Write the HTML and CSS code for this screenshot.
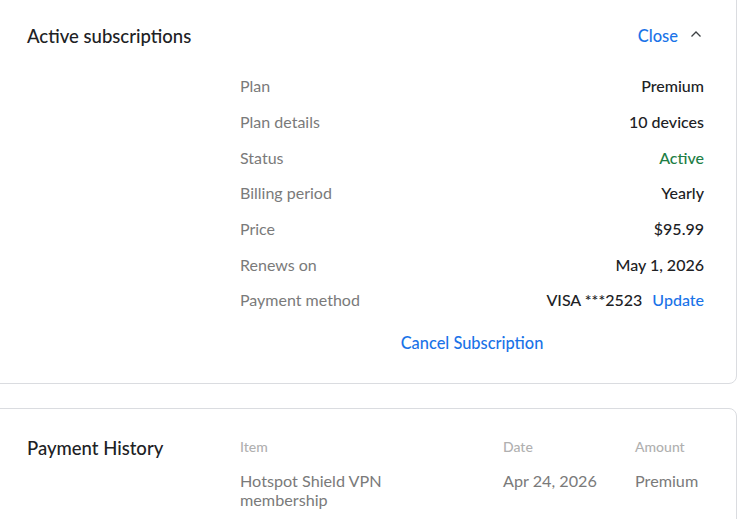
FILE: index.html
```html
<!DOCTYPE html>
<html lang="en">

<head>
    <meta charset="UTF-8">
    <meta name="viewport" content="width=device-width, initial-scale=1.0">
    <title>Account - Subscriptions</title>
    <link rel="stylesheet" href="styles.css">
</head>

<body>

    <section class="card subscriptions">
        <div class="card-head">
            <h2>Active subscriptions</h2>
            <a href="#" class="toggle">Close
                <svg width="12" height="12" viewBox="0 0 12 12"><path d="M1.5 7.5 L6 3 L10.5 7.5" fill="none" stroke="#3c4043" stroke-width="1.3"/></svg>
            </a>
        </div>

        <div class="details">
            <div class="row"><span class="label">Plan</span><span class="value">Premium</span></div>
            <div class="row"><span class="label">Plan details</span><span class="value">10 devices</span></div>
            <div class="row"><span class="label">Status</span><span class="value active">Active</span></div>
            <div class="row"><span class="label">Billing period</span><span class="value">Yearly</span></div>
            <div class="row"><span class="label">Price</span><span class="value">$95.99</span></div>
            <div class="row"><span class="label">Renews on</span><span class="value">May 1, 2026</span></div>
            <div class="row"><span class="label">Payment method</span><span class="value">VISA ***2523 <a href="#" class="link">Update</a></span></div>
            <div class="cancel"><a href="#" class="link">Cancel Subscription</a></div>
        </div>
    </section>

    <section class="card history">
        <h2>Payment History</h2>
        <table>
            <thead>
                <tr>
                    <th class="col-item">Item</th>
                    <th class="col-date">Date</th>
                    <th>Amount</th>
                </tr>
            </thead>
            <tbody>
                <tr>
                    <td>Hotspot Shield VPN membership</td>
                    <td>Apr 24, 2026</td>
                    <td>Premium</td>
                </tr>
            </tbody>
        </table>
    </section>

</body>

</html>
```

FILE: styles.css
```css
body {
    font-family: Lato, "Open Sans", sans-serif;
    margin: 0;
    padding: 0;
    background-color: #fff;
    color: #202124;
    overflow: hidden;
}

.card {
    border: 1px solid #dadce0;
    border-radius: 8px;
    margin-left: -10px;
    width: calc(100% + 9px);
    box-sizing: border-box;
    background-color: white;
}

.subscriptions {
    margin-top: -10px;
    padding: 33px 32px 30px 36px;
}

.card-head {
    display: flex;
    justify-content: space-between;
    align-items: center;
    height: 24px;
}

h2 {
    font-size: 18.5px;
    font-weight: 500;
    margin: 0;
    line-height: 24px;
}

.toggle {
    display: flex;
    align-items: center;
    gap: 12px;
    color: #1a73e8;
    text-decoration: none;
    font-size: 16.5px;
    font-weight: 500;
    padding-right: 2px;
}

.toggle svg {
    margin-top: -3px;
}

.details {
    margin-left: 213px;
    margin-top: 20px;
}

.row {
    display: flex;
    justify-content: space-between;
    align-items: center;
    height: 35.67px;
    font-size: 16px;
}

.label {
    color: #7a7a7a;
}

.value {
    font-weight: 500;
    color: #202124;
}

.value.active {
    color: #1e7e45;
}

.link {
    color: #1a73e8;
    text-decoration: none;
    font-weight: 500;
    margin-left: 6px;
}

.cancel {
    text-align: center;
    margin-top: 15px;
    font-size: 16.4px;
    line-height: 20px;
}

.cancel .link {
    margin-left: 0;
}

.history {
    margin-top: 24px;
    padding: 27px 32px 20px 36px;
    display: flex;
    align-items: flex-start;
}

.history h2 {
    width: 213px;
    flex-shrink: 0;
}

table {
    border-collapse: collapse;
    flex: 1;
}

th {
    text-align: left;
    font-size: 14px;
    line-height: 17px;
    font-weight: 500;
    color: #b0b0b0;
    padding: 2.5px 0 16px;
}

td {
    text-align: left;
    vertical-align: top;
    font-size: 16.2px;
    color: #7a7a7a;
    line-height: 19px;
    padding: 0;
}

.col-item {
    width: 263px;
}

.col-date {
    width: 132px;
}

td:first-child {
    padding-right: 100px;
}
```
